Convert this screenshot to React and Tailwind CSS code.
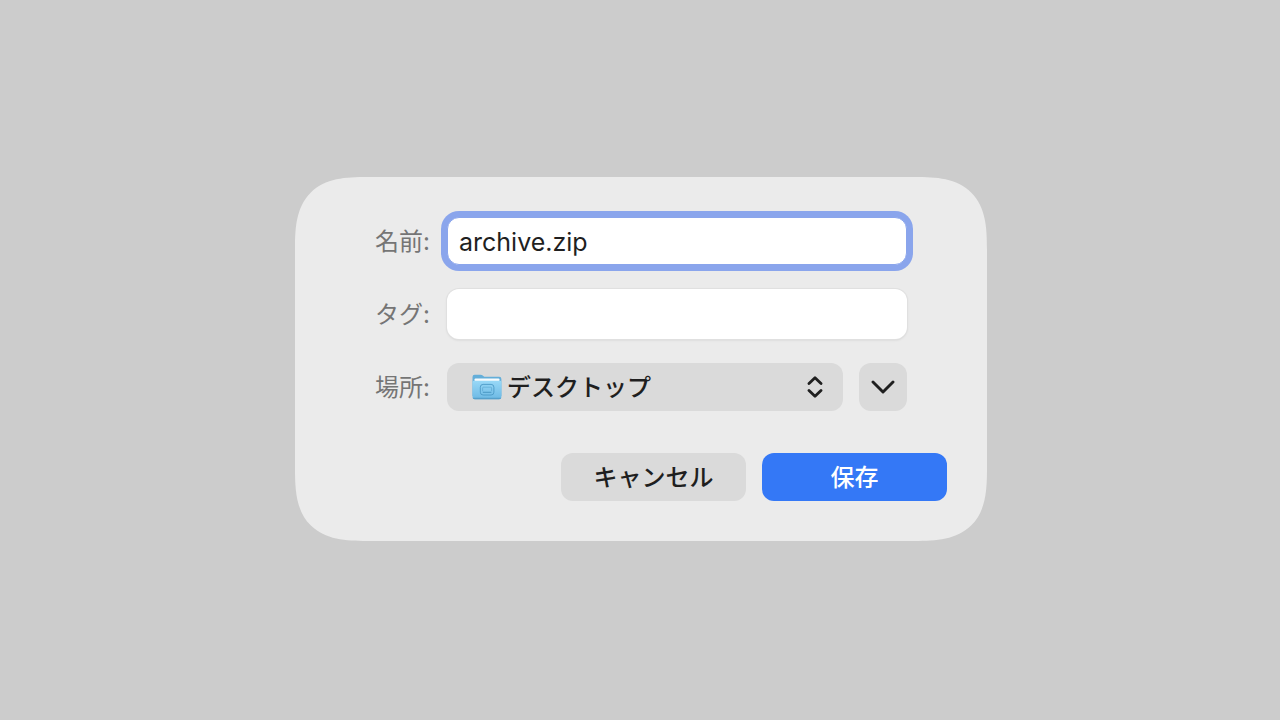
import React, { useState } from 'react';

const FolderIcon = ({ className }) => (
  <svg viewBox="0 0 30 26" className={className} aria-hidden="true">
    <defs>
      <linearGradient id="folder-front" x1="0" y1="0" x2="0" y2="1">
        <stop offset="0" stopColor="#98d8f7" />
        <stop offset="1" stopColor="#6db9e4" />
      </linearGradient>
    </defs>
    <path d="M0.5 3Q0.5 0.8 2.7 0.8H8.6Q9.8 0.8 10.7 1.6L11.6 2.3Q12.2 2.8 13.2 2.8H27.2Q29.4 2.8 29.4 5V22H0.5Z" fill="#64aed9" />
    <rect x="2.6" y="4.4" width="24.8" height="5" rx="0.8" fill="#f7fbfd" />
    <path d="M0.5 8.2Q0.5 6.8 2 6.8H27.9Q29.4 6.8 29.4 8.2V23Q29.4 25.2 27.2 25.2H2.7Q0.5 25.2 0.5 23Z" fill="url(#folder-front)" />
    <path d="M0.6 23.8Q0.9 25.2 2.7 25.2H27.2Q29 25.2 29.3 23.8Z" fill="#569fca" />
    <rect x="8.3" y="10.4" width="13.6" height="10.6" rx="2.8" fill="none" stroke="#4c9ac6" strokeWidth="0.9" />
    <path d="M10.6 17.2V14Q10.6 13.2 11.4 13.2H18.8Q19.6 13.2 19.6 14V17.2" fill="none" stroke="#4c9ac6" strokeWidth="0.5" />
    <path d="M10.8 18.3H19.4" stroke="#4c9ac6" strokeWidth="1.1" />
  </svg>
);

const UpDownIcon = ({ className }) => (
  <svg viewBox="0 0 16 22" className={className} fill="none" stroke="currentColor" strokeWidth="2.8" strokeLinecap="round" strokeLinejoin="round" aria-hidden="true">
    <path d="M2 7.6L8 1.8L14 7.6" />
    <path d="M2 14.4L8 20.2L14 14.4" />
  </svg>
);

const ChevronIcon = ({ className }) => (
  <svg viewBox="0 0 24 14" className={className} fill="none" stroke="currentColor" strokeWidth="2.9" strokeLinecap="round" strokeLinejoin="round" aria-hidden="true">
    <path d="M2 2L12 12L22 2" />
  </svg>
);

const App = () => {
  const [name, setName] = useState('archive.zip');
  const [tags, setTags] = useState('');

  return (
    <main className="min-h-screen bg-[#cccccc] flex items-center justify-center pl-0.5 pb-0.5 font-['Inter','Noto_Sans_CJK_JP',sans-serif] text-2xl text-[#1f1f1f]">
      <form
        onSubmit={(e) => e.preventDefault()}
        className="w-full max-w-[692px] bg-[#ebebeb] p-10 rounded-[52px] supports-[corner-shape:squircle]:rounded-[72px] [corner-shape:superellipse(1.5)]"
      >
        <div className="grid grid-cols-[56px_1fr] items-center gap-x-4 gap-y-6 px-10">
          <label htmlFor="name" className="pt-0.5 pr-px text-right whitespace-nowrap text-[#757575]">名前:</label>
          <input
            id="name"
            type="text"
            value={name}
            onChange={(e) => setName(e.target.value)}
            className="w-full h-12 px-[11px] pt-0.5 rounded-xl bg-white border border-[#8aa5ec] ring-[6px] ring-[#8aa5ec] outline-none text-[25px]"
          />

          <label htmlFor="tags" className="pt-0.5 pr-px text-right whitespace-nowrap text-[#757575]">タグ:</label>
          <input
            id="tags"
            type="text"
            value={tags}
            onChange={(e) => setTags(e.target.value)}
            className="w-full h-[50px] px-3 rounded-xl bg-white ring-1 ring-[#e0e0e0] shadow-sm outline-none"
          />

          <label htmlFor="location" className="pt-0.5 pr-px text-right whitespace-nowrap text-[#757575]">場所:</label>
          <div className="flex gap-4">
            <div className="flex-1 grid items-center">
              <select
                id="location"
                className="col-start-1 row-start-1 w-full h-12 pl-15 pr-12 pt-0.5 rounded-xl bg-[#dadada] appearance-none outline-none font-medium"
              >
                <option>デスクトップ</option>
              </select>
              <FolderIcon className="col-start-1 row-start-1 w-[30px] h-[26px] ml-[25px] pointer-events-none" />
              <UpDownIcon className="col-start-1 row-start-1 justify-self-end w-4 h-[22px] mr-5 pointer-events-none" />
            </div>
            <button type="button" aria-label="詳細を表示" className="size-12 rounded-xl bg-[#dadada] flex items-center justify-center">
              <ChevronIcon className="w-6 h-3.5" />
            </button>
          </div>
        </div>

        <div className="flex justify-end gap-4 mt-[42px]">
          <button type="button" className="w-[185px] h-12 pt-0.5 rounded-xl bg-[#dadada] font-medium">キャンセル</button>
          <button type="submit" className="w-[185px] h-12 pt-0.5 rounded-xl bg-[#3478f6] text-white font-medium">保存</button>
        </div>
      </form>
    </main>
  );
};

export default App;
